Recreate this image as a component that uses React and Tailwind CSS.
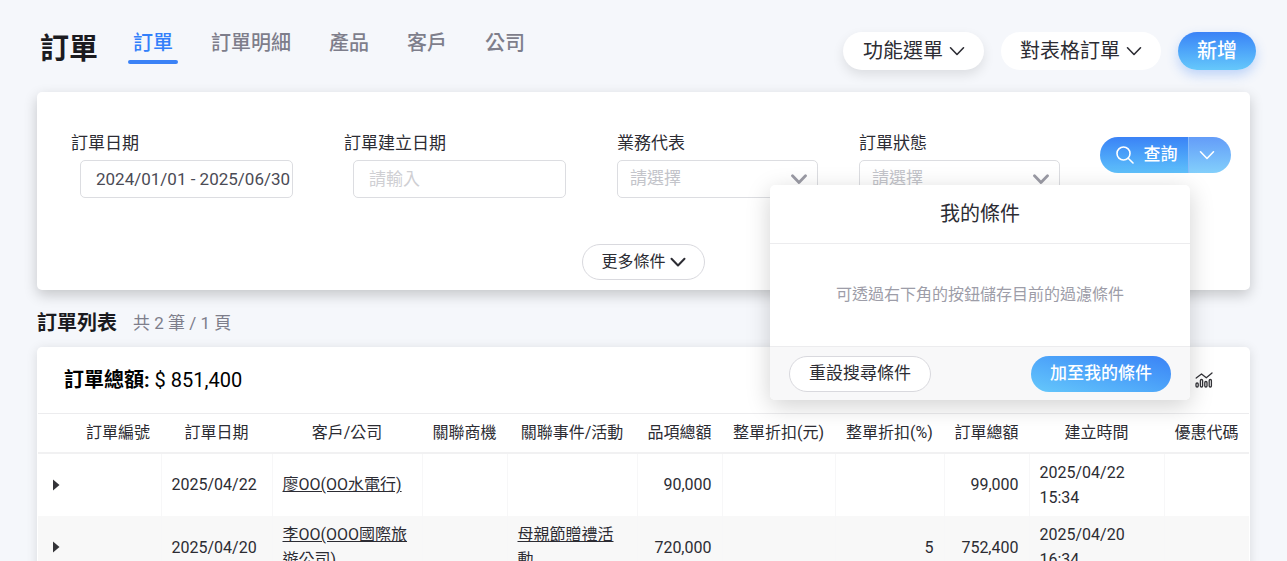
import React from 'react';
import clsx from 'clsx';

const tabs = ['訂單', '訂單明細', '產品', '客戶', '公司'];

const columns = [
  { key: 'no', label: '訂單編號', width: 'w-[86px]' },
  { key: 'date', label: '訂單日期', width: 'w-[111px]' },
  { key: 'customer', label: '客戶/公司', width: 'w-[150px]', link: true },
  { key: 'deal', label: '關聯商機', width: 'w-[85px]' },
  { key: 'event', label: '關聯事件/活動', width: 'w-[130px]', link: true },
  { key: 'subtotal', label: '品項總額', width: 'w-[85px]', right: true },
  { key: 'discount', label: '整單折扣(元)', width: 'w-[113px]', right: true },
  { key: 'percent', label: '整單折扣(%)', width: 'w-[109px]', right: true },
  { key: 'total', label: '訂單總額', width: 'w-[85px]', right: true },
  { key: 'created', label: '建立時間', width: 'w-[135px]' },
  { key: 'coupon', label: '優惠代碼', width: 'w-[85px]' },
];

const orders = [
  { date: '2025/04/22', customer: '廖OO(OO水電行)', subtotal: '90,000', total: '99,000', created: '2025/04/22 15:34' },
  { date: '2025/04/20', customer: '李OO(OOO國際旅遊公司)', event: '母親節贈禮活動', subtotal: '720,000', percent: '5', total: '752,400', created: '2025/04/20 16:34' },
];

function Chevron({ className, strokeWidth = 1.6 }) {
  return (
    <svg viewBox="0 0 16 10" className={clsx('h-[10px] w-4 shrink-0', className)} fill="none" stroke="currentColor" strokeWidth={strokeWidth} strokeLinecap="round" strokeLinejoin="round" aria-hidden="true">
      <path d="M1.5 1.8 8 8.500l6.500-6.700" />
    </svg>
  );
}

function SearchIcon() {
  return (
    <svg viewBox="0 0 18 18" className="h-[18px] w-[18px] shrink-0" fill="none" stroke="currentColor" strokeWidth="1.600" strokeLinecap="round" aria-hidden="true">
      <circle cx="7.500" cy="7.500" r="6.500" />
      <path d="m12.200 12.200 4.800 4.800" />
    </svg>
  );
}

function ChartIcon() {
  return (
    <svg viewBox="0 0 18 17" className="h-[17px] w-[18px]" fill="none" stroke="currentColor" strokeWidth="1.300" strokeLinecap="round" strokeLinejoin="round" aria-hidden="true">
      <path d="m1.200 6 5.300-4 4.800 3.800L17 1" />
      <rect x="1" y="11" width="2.200" height="4" rx="1.100" />
      <rect x="5.400" y="7.500" width="2.200" height="7.500" rx="1.100" />
      <rect x="9.800" y="9.500" width="2.200" height="5.500" rx="1.100" />
      <rect x="14.200" y="7.500" width="2.200" height="7.500" rx="1.100" />
    </svg>
  );
}

function DateField({ id, label, value }) {
  return (
    <div>
      <label htmlFor={id} className="block text-[17px] leading-[26px]">{label}</label>
      <input
        id={id}
        type="text"
        defaultValue={value}
        placeholder="請輸入"
        className="mt-1 ml-[9px] block h-[38px] w-[213px] rounded-[5px] border border-[#dcdde1] bg-white pl-[15px] text-[17px] text-[#4b4b55] outline-none placeholder:text-[#cfcfd3]"
      />
    </div>
  );
}

function SelectField({ id, label }) {
  return (
    <div>
      <label htmlFor={id} className="block text-[17px] leading-[26px]">{label}</label>
      <div className="relative mt-1 w-[201px]">
        <select id={id} className="block h-[38px] w-full appearance-none rounded-[5px] border border-[#dcdde1] bg-white px-3 text-[17px] text-[#c3c4ca] outline-none">
          <option>請選擇</option>
        </select>
        <Chevron strokeWidth={2.8} className="pointer-events-none absolute top-[14px] right-[11px] text-[#9b9ba5]" />
      </div>
    </div>
  );
}

function ConditionPopover() {
  return (
    <div role="dialog" aria-label="我的條件" className="absolute top-12 right-[41px] z-10 w-[420px] rounded-[5px] bg-white text-[#2c2c33] shadow-[0_6px_24px_rgba(0,0,0,0.18)]">
      <h3 className="border-b border-[#ececee] pt-[15px] pb-[15px] text-center text-[20px] leading-7">我的條件</h3>
      <p className="py-[39px] text-center text-[16px] leading-6 text-[#9d9da8]">可透過右下角的按鈕儲存目前的過濾條件</p>
      <div className="flex items-center justify-between rounded-b-[5px] border-t border-[#ececee] bg-[#f8f8f9] px-[19px] pt-[9px] pb-2">
        <button className="h-9 rounded-full border border-[#d9d9de] bg-white px-[19px] text-[17px]">重設搜尋條件</button>
        <button className="h-9 rounded-full bg-linear-to-tr from-[#66c8fb] to-[#3b82f6] px-[19px] text-[17px] font-medium text-white">加至我的條件</button>
      </div>
    </div>
  );
}

export default function App() {
  return (
    <div className="h-screen overflow-hidden bg-[#f5f7fb] px-[37px] font-[Roboto,'Noto_Sans_CJK_TC',sans-serif] text-[#2c2c33]">
      <header className="-mr-[6px] flex items-start pt-7 pb-[22px] pl-[3px]">
        <h1 className="mt-1 text-[29px] leading-[34px] font-bold text-[#1b1b1f]">訂單</h1>
        <nav className="ml-[30px] flex gap-7">
          {tabs.map((tab, i) => (
            <a key={tab} href="#" className={clsx('block px-[5px] text-[20px] leading-[30px] font-medium', i === 0 ? 'text-[#3380fa]' : 'text-[#7e7e8b]')}>
              {tab}
              {i === 0 && <span className="-mx-[5px] mt-[2px] block h-1 rounded-full bg-[#3b82f6]" />}
            </a>
          ))}
        </nav>
        <div className="mt-1 ml-auto flex gap-[17px] text-[20px]">
          <button className="flex h-[38px] items-center gap-[6px] rounded-full bg-white pr-[19px] pl-5 shadow-[0_5px_12px_rgba(0,0,0,0.1)]">
            功能選單 <Chevron />
          </button>
          <button className="flex h-[38px] items-center gap-[6px] rounded-full bg-white px-[19px]">
            對表格訂單 <Chevron />
          </button>
          <button className="h-[38px] rounded-full bg-linear-to-b from-[#3b82f6] to-[#66c8fb] px-[19px] font-medium text-white shadow-[0_5px_12px_rgba(59,130,246,0.3)]">新增</button>
        </div>
      </header>

      {/* Filters */}
      <section className="rounded-[5px] bg-white pt-[38px] pb-[10px] shadow-[0_5px_14px_rgba(0,0,0,0.2)]">
        <form className="grid grid-cols-[273fr_273fr_242fr_241fr_131fr] pr-[19px] pl-[34px]" onSubmit={e => e.preventDefault()}>
          <DateField id="order-date" label="訂單日期" value="2024/01/01 - 2025/06/30" />
          <DateField id="created-date" label="訂單建立日期" />
          <SelectField id="sales-rep" label="業務代表" />
          <SelectField id="order-status" label="訂單狀態" />
          <div className="relative mt-[7px] flex h-9 self-start text-white">
            <button className="flex flex-1 items-center justify-center gap-[10px] rounded-l-full bg-linear-to-b from-[#3b82f6] to-[#5fc0fa] pl-[5px] text-[17px] font-medium">
              <SearchIcon /> 查詢
            </button>
            <button aria-label="我的條件" aria-expanded="true" className="flex w-[43px] items-center rounded-r-full border-l border-[#86bbfb] bg-linear-to-b from-[#649cf8] to-[#83cffb] pl-[10px]">
              <Chevron />
            </button>
            <ConditionPopover />
          </div>
        </form>
        <button className="mx-auto mt-[46px] flex h-9 items-center gap-1 rounded-full border border-[#d9d9de] bg-white px-[18px] text-[16px]">
          更多條件 <Chevron strokeWidth={2} />
        </button>
      </section>

      {/* Order list */}
      <div className="mt-[18px] mb-[9px] flex items-center gap-4 leading-[30px]">
        <h2 className="text-[20px] font-bold text-[#1b1b1f]">訂單列表</h2>
        <span className="text-[17px] text-[#7e7e8b]">共 2 筆 / 1 頁</span>
      </div>
      <section className="rounded-[5px] bg-white px-px shadow-[0_2px_12px_rgba(0,0,0,0.12)]">
        <div className="flex h-[66px] items-center justify-between pr-9 pl-[26px] text-black">
          <p className="text-[20px]"><span className="font-bold">訂單總額:</span> $ 851,400</p>
          <button aria-label="圖表" className="text-[#333338]"><ChartIcon /></button>
        </div>
        <table className="w-full table-fixed border-collapse text-[16px] leading-[25px]">
          <thead>
            <tr className="h-[39px] border-t border-b-2 border-t-[#ececee] border-b-[#f1f1f2]">
              <th className="w-[37px]" aria-label="展開" />
              {columns.map(col => (
                <th key={col.key} className={clsx('font-normal whitespace-nowrap', col.width)}>{col.label}</th>
              ))}
            </tr>
          </thead>
          <tbody>
            {orders.map(order => (
              <tr key={order.date} className="h-[63px] even:bg-[#f8f8f8]">
                <td className="pl-[14px]">
                  <button aria-label="展開" className="block text-[#333338]">
                    <svg viewBox="0 0 8 12" className="h-3 w-2" fill="currentColor" aria-hidden="true">
                      <path d="M1 .5 7.500 6 1 11.500z" />
                    </svg>
                  </button>
                </td>
                {columns.map(col => (
                  <td key={col.key} className={clsx('border-r border-[#f7f7f8] px-[10px] last:border-r-0', col.right && 'text-right')}>
                    {col.link && order[col.key] ? <a href="#" className="underline">{order[col.key]}</a> : order[col.key]}
                  </td>
                ))}
              </tr>
            ))}
          </tbody>
        </table>
      </section>
    </div>
  );
}
